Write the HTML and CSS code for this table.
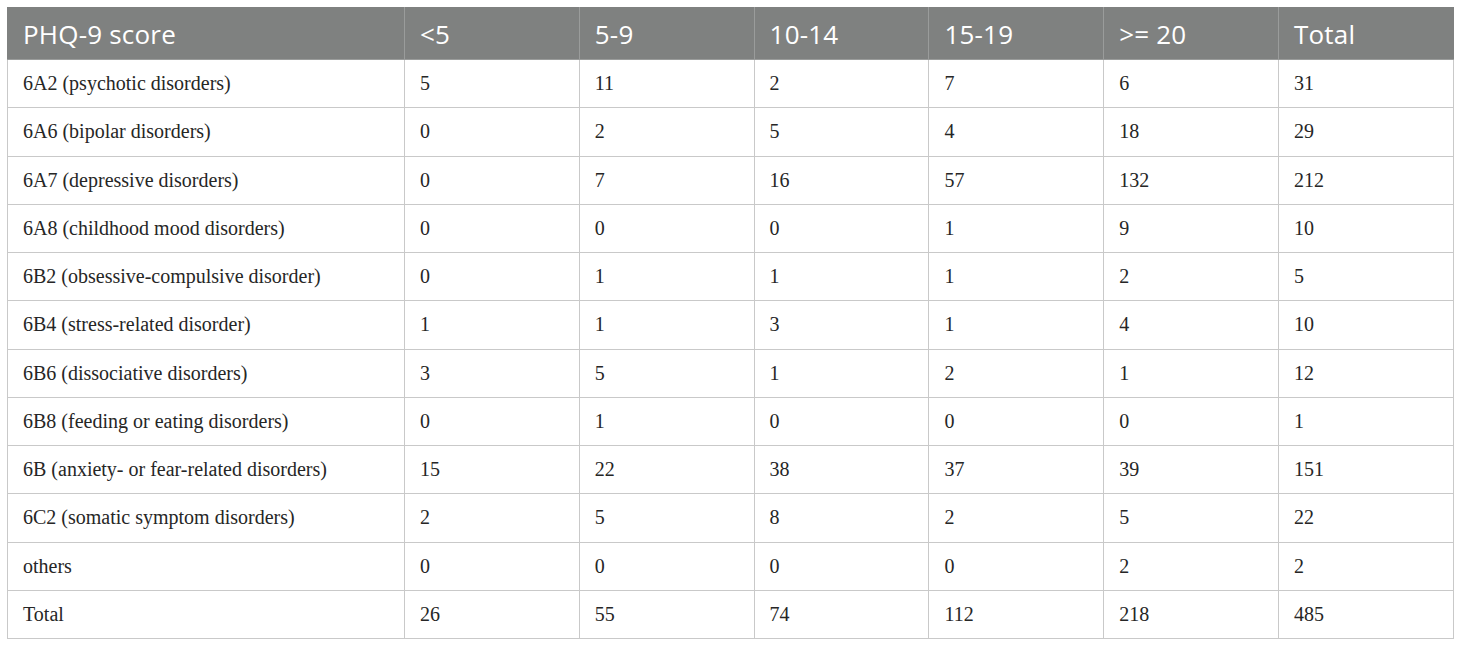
FILE: index.html
```html
<!DOCTYPE html>
<html lang="en">
<head>
<meta charset="utf-8">
<title>PHQ-9 score table</title>
<link rel="stylesheet" href="styles.css">
</head>
<body>
<table class="data">
  <colgroup>
    <col class="c-label">
    <col class="c-num"><col class="c-num"><col class="c-num"><col class="c-num"><col class="c-num"><col class="c-num">
  </colgroup>
  <thead>
    <tr><th>PHQ-9 score</th><th>&lt;5</th><th>5-9</th><th>10-14</th><th>15-19</th><th>&gt;= 20</th><th>Total</th></tr>
  </thead>
  <tbody>
    <tr><td>6A2 (psychotic disorders)</td><td>5</td><td>11</td><td>2</td><td>7</td><td>6</td><td>31</td></tr>
    <tr><td>6A6 (bipolar disorders)</td><td>0</td><td>2</td><td>5</td><td>4</td><td>18</td><td>29</td></tr>
    <tr><td>6A7 (depressive disorders)</td><td>0</td><td>7</td><td>16</td><td>57</td><td>132</td><td>212</td></tr>
    <tr><td>6A8 (childhood mood disorders)</td><td>0</td><td>0</td><td>0</td><td>1</td><td>9</td><td>10</td></tr>
    <tr><td>6B2 (obsessive-compulsive disorder)</td><td>0</td><td>1</td><td>1</td><td>1</td><td>2</td><td>5</td></tr>
    <tr><td>6B4 (stress-related disorder)</td><td>1</td><td>1</td><td>3</td><td>1</td><td>4</td><td>10</td></tr>
    <tr><td>6B6 (dissociative disorders)</td><td>3</td><td>5</td><td>1</td><td>2</td><td>1</td><td>12</td></tr>
    <tr><td>6B8 (feeding or eating disorders)</td><td>0</td><td>1</td><td>0</td><td>0</td><td>0</td><td>1</td></tr>
    <tr><td>6B (anxiety- or fear-related disorders)</td><td>15</td><td>22</td><td>38</td><td>37</td><td>39</td><td>151</td></tr>
    <tr><td>6C2 (somatic symptom disorders)</td><td>2</td><td>5</td><td>8</td><td>2</td><td>5</td><td>22</td></tr>
    <tr><td>others</td><td>0</td><td>0</td><td>0</td><td>0</td><td>2</td><td>2</td></tr>
    <tr><td>Total</td><td>26</td><td>55</td><td>74</td><td>112</td><td>218</td><td>485</td></tr>
  </tbody>
</table>
</body>
</html>
```

FILE: styles.css
```css
html, body {
  margin: 0;
  padding: 0;
  background: #ffffff;
}

body {
  padding: 7px 0 0 7px;
}

.data {
  border-collapse: collapse;
  table-layout: fixed;
  width: 1446px;
}

.c-label { width: 397px; }
.c-num { width: 174.8px; }

.data th,
.data td {
  border: 1px solid #c9c9c9;
  text-align: left;
  vertical-align: middle;
  padding: 0 0 0 15px;
  white-space: nowrap;
}

.data th {
  background: #7f8180;
  border-color: #9a9c9b;
  color: #ffffff;
  font-family: "Open Sans", Lato, sans-serif;
  font-weight: 400;
  font-size: 26px;
  letter-spacing: 0.2px;
  height: 51px;
  border-top-color: #7f8180;
}

.data th:first-child { border-left-color: #7f8180; }
.data th:last-child { border-right-color: #7f8180; }

.data td {
  color: #262626;
  font-family: "Liberation Serif", "Times New Roman", serif;
  font-size: 20px;
  height: 47.25px;
}
```
